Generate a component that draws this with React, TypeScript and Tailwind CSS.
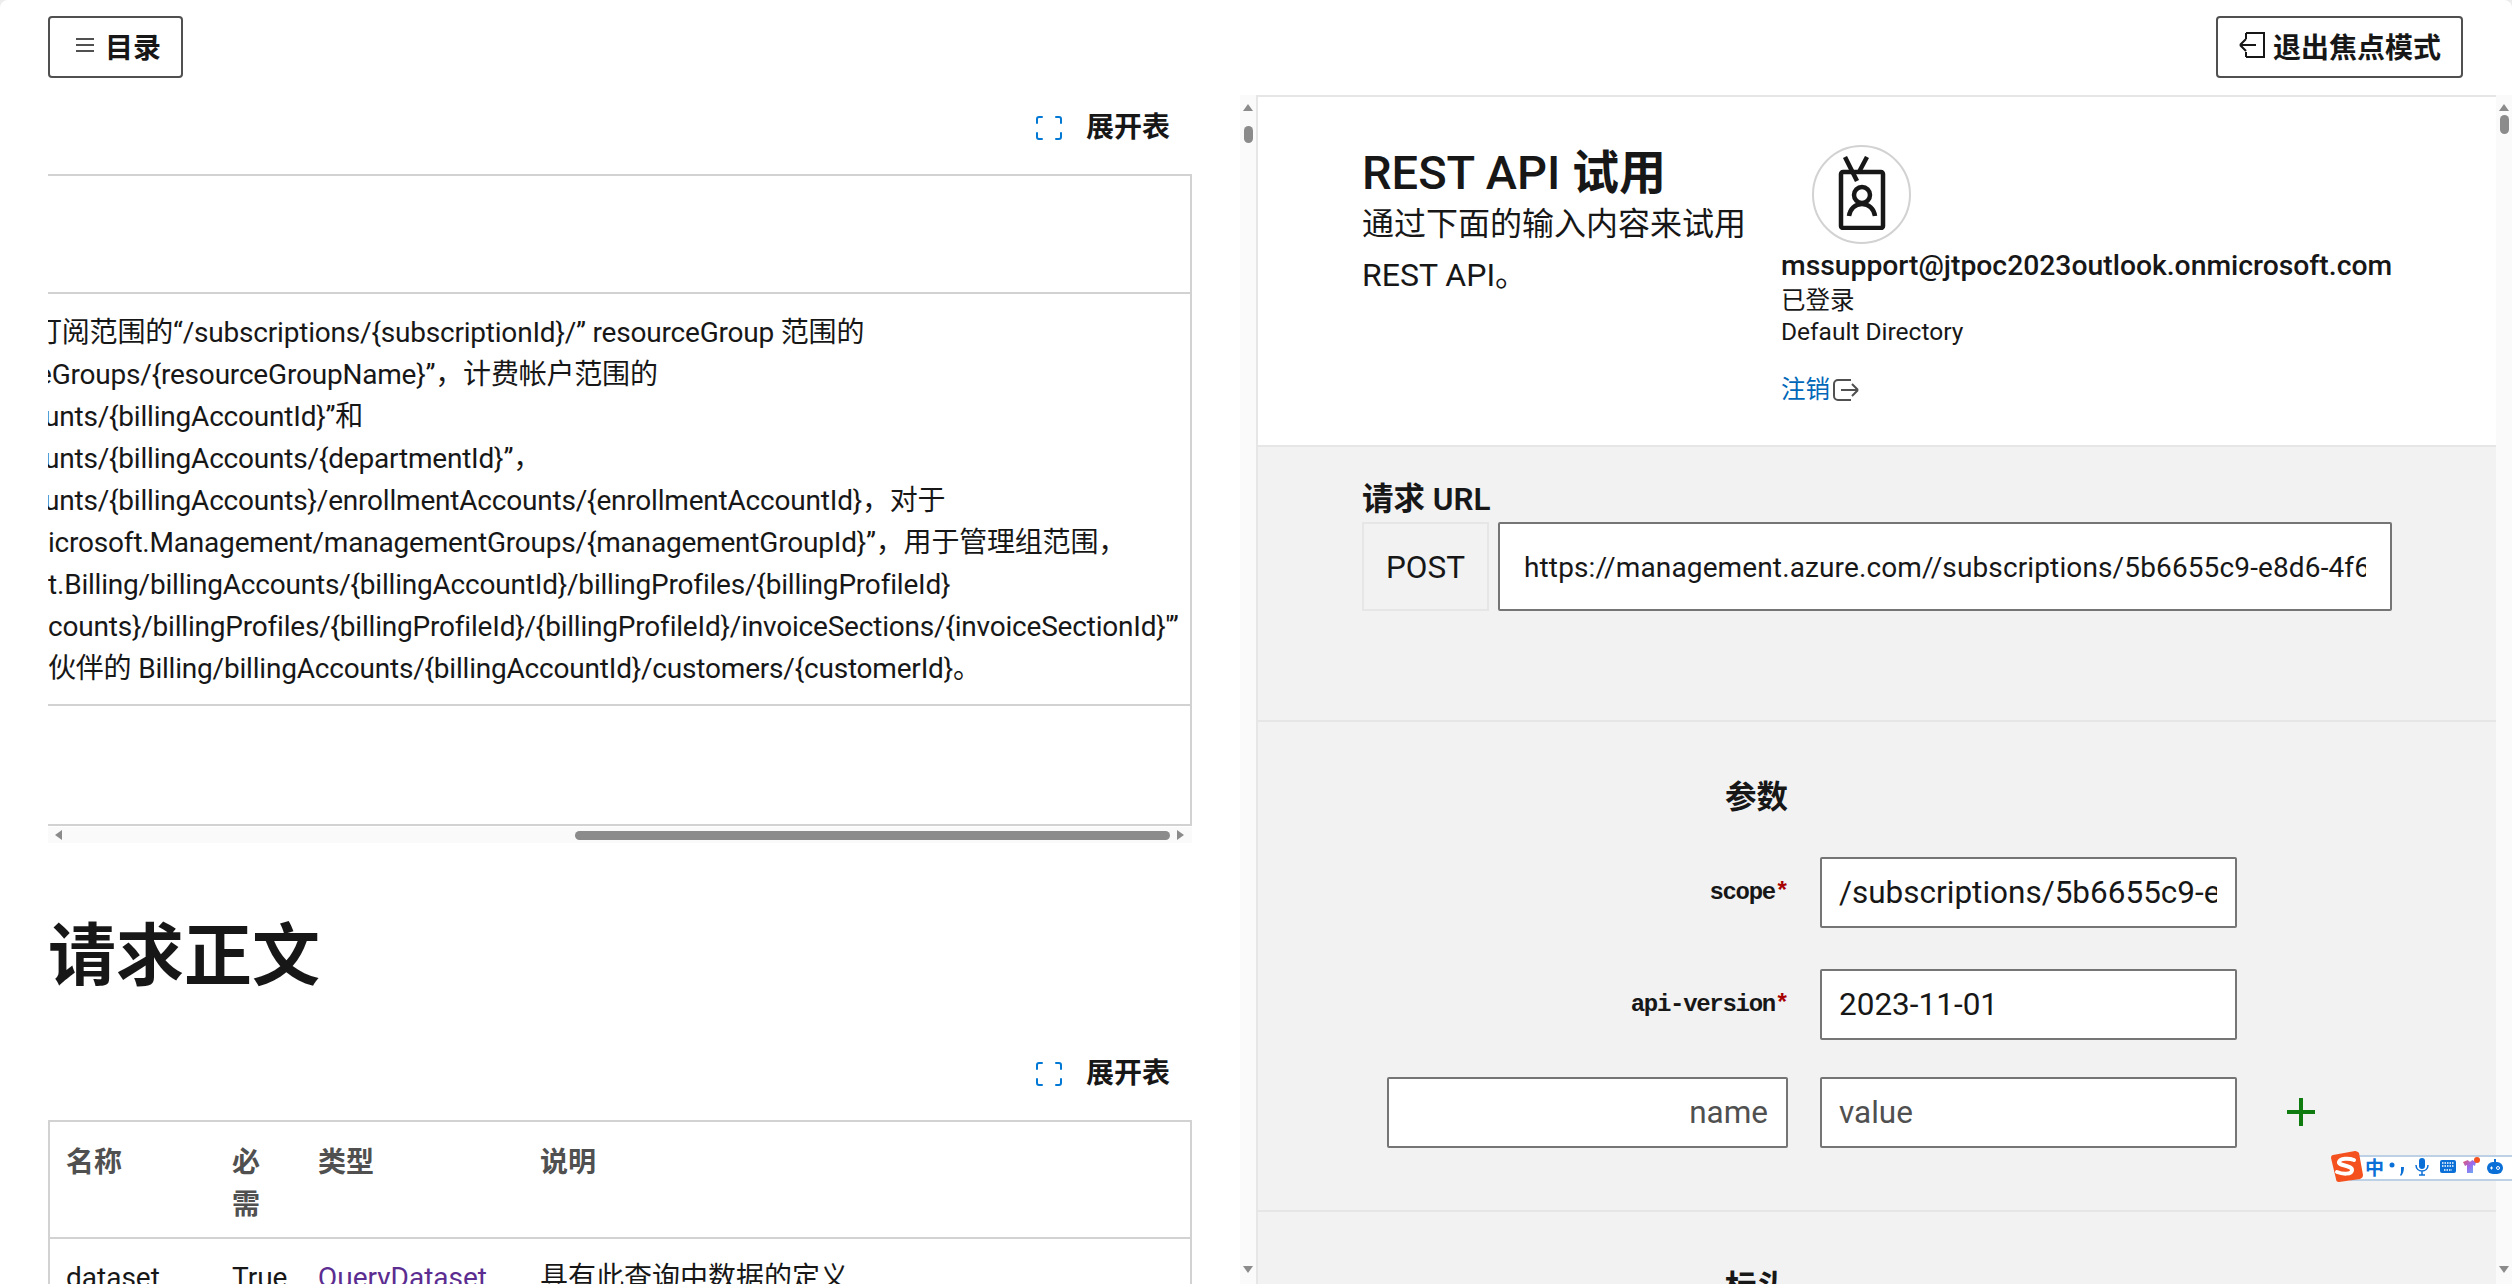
import React from "react";

const cellLines: { text: string; cls: string }[] = [
  { text: "订阅范围的“/subscriptions/{subscriptionId}/” resourceGroup 范围的", cls: "-ml-[14px]" },
  { text: "eGroups/{resourceGroupName}”，计费帐户范围的", cls: "-ml-[11px]" },
  { text: "unts/{billingAccountId}”和", cls: "-ml-[4px]" },
  { text: "unts/{billingAccounts/{departmentId}”，", cls: "-ml-[4px]" },
  { text: "unts/{billingAccounts}/enrollmentAccounts/{enrollmentAccountId}，对于", cls: "-ml-[4px]" },
  { text: "icrosoft.Management/managementGroups/{managementGroupId}”，用于管理组范围，", cls: "ml-0" },
  { text: "t.Billing/billingAccounts/{billingAccountId}/billingProfiles/{billingProfileId}", cls: "ml-0" },
  { text: "counts}/billingProfiles/{billingProfileId}/{billingProfileId}/invoiceSections/{invoiceSectionId}'”", cls: "ml-0" },
  { text: "伙伴的 Billing/billingAccounts/{billingAccountId}/customers/{customerId}。", cls: "ml-0" },
];

function ExpandIcon() {
  return (
    <svg width="26" height="24" viewBox="0 0 26 24" fill="none" stroke="#0078d4" strokeWidth="2" strokeLinecap="round">
      <path d="M1 7V3a2 2 0 0 1 2-2h3M20 1h3a2 2 0 0 1 2 2v4M25 17v4a2 2 0 0 1-2 2h-3M6 23H3a2 2 0 0 1-2-2v-4" />
    </svg>
  );
}

function ExpandRow({ className }: { className: string }) {
  return (
    <div className={`flex items-center justify-end gap-[24px] pr-[22px] ${className}`}>
      <ExpandIcon />
      <span className="text-[28px] leading-[42px] font-semibold text-[#171717]">展开表</span>
    </div>
  );
}

function Scrollbar({ thumb }: { thumb: string }) {
  return (
    <div className="relative w-[16px] shrink-0 bg-[#fafafa] h-full flex flex-col items-center">
      <svg width="10" height="7" viewBox="0 0 10 7" className="mt-[9px] shrink-0"><path d="M5 0l5 7H0z" fill="#8b8b8b" /></svg>
      <div className={`w-[9px] rounded-full bg-[#8b8b8b] ${thumb}`} />
      <div className="flex-1" />
      <svg width="10" height="7" viewBox="0 0 10 7" className="mb-[11px] shrink-0"><path d="M5 7L0 0h10z" fill="#8b8b8b" /></svg>
    </div>
  );
}

function Field({ value, placeholder, right, className }: { value?: string; placeholder?: string; right?: boolean; className: string }) {
  return (
    <div className={`bg-white border-2 border-[#757575] rounded-[2px] pl-[17px] pr-[18px] flex items-center h-[71px] ${right ? "justify-end" : ""} ${className}`}>
      <div className={`overflow-hidden whitespace-nowrap text-[31.500px] ${placeholder ? "text-[#505050]" : "text-[#171717]"}`}>{value ?? placeholder}</div>
    </div>
  );
}

function Label({ name }: { name: string }) {
  return (
    <div className="w-[401px] text-right font-['Liberation_Mono',monospace] font-bold text-[24px] tracking-[-1.300px] text-[#171717]">
      {name}
      <span className="text-[#a80000]">*</span>
    </div>
  );
}

function SogouBar() {
  return (
    <div className="absolute left-[2330px] top-[1151px] w-[182px] h-[32px]">
      <div className="absolute left-[20px] right-0 top-[4px] h-[26px] bg-white border-y-2 border-[#bcd0e6]" />
      <svg width="33" height="31" viewBox="0 0 33 31" className="absolute left-0 top-0">
        <path d="M3 4l22-4c2 0 3 1 4 2l4 22c0 2-1 3-3 4L9 31c-2 0-3-1-3-3L1 7c0-2 1-3 2-3z" fill="#f4511e" />
        <path d="M24 9c-5-2-14-2-15 2s13 3 13 8-10 4-15 2" fill="none" stroke="#fff" strokeWidth="4" strokeLinecap="round" />
      </svg>
      <span className="absolute left-[35px] top-[2px] text-[19px] leading-[28px] font-bold text-[#0a6fd6] font-['Noto_Sans_CJK_SC',sans-serif]">中</span>
      <svg width="16" height="16" viewBox="0 0 16 16" className="absolute left-[59px] top-[9px]">
        <circle cx="3" cy="5" r="2.500" fill="#0a6fd6" />
        <path d="M12 7h3c0 4-1 7-3 9l-1-1c1-1 1-3 1-4z" fill="#0a6fd6" />
      </svg>
      <svg width="14" height="18" viewBox="0 0 14 18" className="absolute left-[85px] top-[7px]">
        <rect x="4" y="0" width="6" height="11" rx="3" fill="#0a6fd6" />
        <path d="M1 7c0 8 12 8 12 0M7 13v4M4 17h6" fill="none" stroke="#0a6fd6" strokeWidth="1.500" />
      </svg>
      <svg width="16" height="14" viewBox="0 0 16 14" className="absolute left-[110px] top-[9px]">
        <rect width="16" height="13" rx="2" fill="#0a6fd6" />
        <path d="M2 3h12M2 6h12M4 10h8" stroke="#fff" strokeWidth="1.500" strokeDasharray="1.500 1" />
      </svg>
      <svg width="18" height="18" viewBox="0 0 18 18" className="absolute left-[133px] top-[6px]">
        <defs>
          <linearGradient id="shirt" x1="0" y1="0" x2="1" y2="1">
            <stop offset="0" stopColor="#e0566e" />
            <stop offset="0.5" stopColor="#9a6bf0" />
            <stop offset="1" stopColor="#5cc0f5" />
          </linearGradient>
        </defs>
        <path d="M0 5l5-2c1 2 3 2 4 0l4 2-1 4-2-1v8H4V8L2 9z" fill="url(#shirt)" />
        <circle cx="14" cy="3" r="3" fill="#f4511e" />
      </svg>
      <svg width="18" height="16" viewBox="0 0 18 16" className="absolute left-[157px] top-[8px]">
        <rect y="3" width="16" height="12" rx="6" fill="#0a6fd6" />
        <path d="M8 0v3" stroke="#0a6fd6" strokeWidth="2" />
        <path d="M3 9h3M4.500 7.500v3" stroke="#fff" strokeWidth="1" />
        <circle cx="11" cy="9" r="1.500" fill="none" stroke="#fff" />
      </svg>
    </div>
  );
}

export default function App() {
  return (
    <div className="bg-[#ececec] w-[2512px] h-[1284px] overflow-hidden">
      <div className="relative w-[2512px] h-[1284px] overflow-hidden rounded-t-[8px] bg-white text-[#171717] font-['Roboto','Noto_Sans_CJK_SC',sans-serif] flex flex-col">
        <header className="h-[95px] shrink-0 flex items-start justify-between pt-[16px] pl-[48px] pr-[49px]">
          <button className="h-[62px] w-[135px] border-2 border-[#505050] rounded-[4px] flex items-center pl-[25px] gap-[10px]">
            <svg width="20" height="16" viewBox="0 0 20 16" className="-mt-[4px]" stroke="#171717" strokeWidth="1.500"><path d="M1 2h18M1 8h18M1 14h18" /></svg>
            <span className="text-[28px] font-bold leading-none pt-[4px]">目录</span>
          </button>
          <button className="h-[62px] w-[247px] border-2 border-[#505050] rounded-[4px] flex items-center pl-[21px] gap-[7px]">
            <svg width="27" height="26" viewBox="0 0 27 26" className="-mt-[4px]" fill="none" stroke="#171717" strokeWidth="2"><path d="M7 1h18v24H7M7 1v6M7 25v-5M1 13h16M1 13l6-6M1 13l6 6" /></svg>
            <span className="text-[28px] font-bold leading-none pt-[4px]">退出焦点模式</span>
          </button>
        </header>

        <main className="flex-1 flex min-h-0">
          <section className="w-[1240px] shrink-0 overflow-hidden pl-[48px] pr-[48px]">
            <ExpandRow className="h-[65px] mb-[14px]" />
            <div className="h-[652px] border-t-2 border-r-2 border-[#d2d2d2] overflow-hidden flex flex-col">
              <div className="h-[116px] shrink-0 border-b-2 border-[#d2d2d2] box-content" />
              <div className="h-[410px] shrink-0 pt-[18px] text-[28px] tracking-[-0.200px] leading-[42px] whitespace-nowrap overflow-hidden">
                {cellLines.map((l) => (
                  <div key={l.text} className={l.cls}>{l.text}</div>
                ))}
              </div>
              <div className="flex-1 border-t-2 border-b-2 border-[#d2d2d2]" />
            </div>
            <div className="h-[16px] mt-[1px] bg-[#fafafa] flex items-center relative pr-[6px]">
              <svg width="7" height="10" viewBox="0 0 7 10" className="ml-[7px] shrink-0"><path d="M0 5l7-5v10z" fill="#8b8b8b" /></svg>
              <div className="ml-[513px] w-[595px] h-[9px] rounded-full bg-[#8b8b8b]" />
              <svg width="7" height="10" viewBox="0 0 7 10" className="ml-[7px] shrink-0"><path d="M7 5L0 0v10z" fill="#8b8b8b" /></svg>
            </div>
            <h2 className="mt-[68px] text-[68px] leading-[92px] font-bold text-[#171717]">请求正文</h2>
            <ExpandRow className="mt-[39px] h-[63px]" />
            <div className="mt-[15px] border-2 border-[#d2d2d2] border-b-0 h-[180px] overflow-hidden">
              <div className="grid grid-cols-[182px_86px_222px_1fr] h-[117px] border-b-2 border-[#d2d2d2] pt-[20px] text-[28px] leading-[42px] font-bold text-[#505050]">
                <div className="pl-[16px]">名称</div>
                <div className="w-[44px]">必需</div>
                <div>类型</div>
                <div>说明</div>
              </div>
              <div className="grid grid-cols-[182px_86px_222px_1fr] pt-[18px] text-[28px] leading-[42px]">
                <div className="pl-[16px]">dataset</div>
                <div>True</div>
                <div className="text-[#5c2d91]">QueryDataset</div>
                <div>具有此查询中数据的定义</div>
              </div>
            </div>
          </section>

          <Scrollbar thumb="mt-[15px] h-[17px]" />

          <section className="flex-1 min-w-0 border-l-2 border-t-2 border-[#e6e6e6] flex flex-col overflow-hidden">
            <div className="h-[300px] shrink-0 border-b-2 border-[#e6e6e6] box-content flex pl-[104px] pt-[48px]">
              <div className="w-[419px] shrink-0">
                <h2 className="text-[47px] leading-[56px] font-medium">REST API <span className="font-bold">试用</span></h2>
                <p className="text-[32px] leading-[51px] -mt-[2px] w-[390px]">通过下面的输入内容来试用 REST API。</p>
              </div>
              <div>
                <div className="ml-[31px] w-[99px] h-[99px] rounded-full border-2 border-[#d2d2d2] flex items-center justify-center">
                  <svg width="50" height="74" viewBox="0 0 50 74" fill="none" stroke="#171717" strokeWidth="4.500" className="-mt-[3px]">
                    <rect x="4" y="16" width="42" height="56" rx="2" />
                    <path d="M8 1l12 24M30 1l-8 15" />
                    <circle cx="25" cy="39" r="8" />
                    <path d="M12 60c1-7 6-12 13-12s12 5 13 12" />
                  </svg>
                </div>
                <div className="mt-[4px] text-[28.300px] leading-[36px] font-medium whitespace-nowrap">mssupport@jtpoc2023outlook.onmicrosoft.com</div>
                <div className="text-[24.500px] leading-[34px]">已登录</div>
                <div className="text-[24.500px] leading-[28px]">Default Directory</div>
                <div className="mt-[26px] flex items-center gap-[3px] text-[24.500px] leading-[36px] text-[#0067b8]">
                  注销
                  <svg width="26" height="24" viewBox="0 0 26 24" fill="none" stroke="#505050" strokeWidth="2"><path d="M18 2H5a4 4 0 0 0-4 4v12a4 4 0 0 0 4 4h13M8 12h17M25 12l-6-6M25 12l-6 6" /></svg>
                </div>
              </div>
            </div>

            <div className="h-[242px] shrink-0 bg-[#f2f2f2] border-b-2 border-[#e6e6e6] box-content pl-[104px] pt-[31px]">
              <h3 className="text-[31.500px] leading-[44px] font-semibold">请求 URL</h3>
              <div className="flex gap-[9px] w-[1030px]">
                <div className="w-[127px] h-[89px] border-2 border-[#e6e6e6] flex items-center justify-center pt-[3px] text-[31.500px]">POST</div>
                <div className="flex-1 min-w-0 h-[89px] bg-white border-2 border-[#757575] rounded-[2px] px-[24px] pt-[3px] flex items-center">
                  <div className="overflow-hidden whitespace-nowrap text-[28px] tracking-[0.130px]">https://management.azure.com//subscriptions/5b6655c9-e8d6-4f6b-8c3a-1d2e3f4a5b6c</div>
                </div>
              </div>
            </div>

            <div className="h-[434px] shrink-0 bg-[#f2f2f2] border-b-2 border-[#e6e6e6] box-content pt-[54px] pl-[129px] flex flex-col">
              <h3 className="ml-[338px] text-[31.500px] leading-[44px] font-semibold">参数</h3>
              <div className="mt-[37px] flex items-center gap-[32px]">
                <Label name="scope" />
                <Field value="/subscriptions/5b6655c9-e8d6" className="w-[417px]" />
              </div>
              <div className="mt-[41px] flex items-center gap-[32px]">
                <Label name="api-version" />
                <Field value="2023-11-01" className="w-[417px]" />
              </div>
              <div className="mt-[37px] flex items-center gap-[32px]">
                <Field placeholder="name" right className="w-[401px]" />
                <Field placeholder="value" className="w-[417px]" />
                <svg width="28" height="28" viewBox="0 0 28 28" className="ml-[18px] -mt-[2px]"><path d="M14 0v28M0 14h28" stroke="#107c10" strokeWidth="4" /></svg>
              </div>
            </div>

            <div className="flex-1 bg-[#f2f2f2] pl-[467px] pt-[54px]">
              <h3 className="text-[31.500px] leading-[44px] font-semibold">标头</h3>
            </div>
          </section>

          <Scrollbar thumb="mt-[4px] h-[19px]" />
        </main>

        <SogouBar />
      </div>
    </div>
  );
}
